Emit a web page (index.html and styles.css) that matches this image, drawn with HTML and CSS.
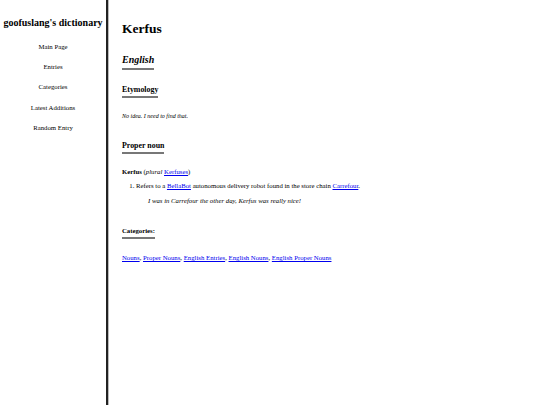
FILE: index.html
```html
<!DOCTYPE html>
<html lang="en">
<head>
  <meta charset="UTF-8" />
  <meta name="viewport" content="width=device-width, initial-scale=1.0"/>
  <title>Kerfus - goofuslang's dictionary</title>
  <link rel="stylesheet" href="styles.css">
</head>
<body>
  <aside class="sidebar">
    <h1 class="site-title">goofuslang's dictionary</h1>
    <nav>
      <a href="#" class="nav-link">Main Page</a>
      <a href="#" class="nav-link">Entries</a>
      <a href="#" class="nav-link">Categories</a>
      <a href="#" class="nav-link">Latest Additions</a>
      <a href="#" class="nav-link">Random Entry</a>
    </nav>
  </aside>

  <main class="entry">
    <h1 class="entry-title">Kerfus</h1>

    <h2 class="lang"><span class="bar">English</span></h2>

    <h3 class="section"><span class="bar">Etymology</span></h3>
    <p class="etym">No idea. I need to find that.</p>

    <h3 class="section pos"><span class="bar">Proper noun</span></h3>
    <p class="headword"><b>Kerfus</b> (<i>plural</i> <a href="#">Kerfuses</a>)</p>
    <ol class="senses">
      <li>
        Refers to a <a href="#">BellaBot</a> autonomous delivery robot found in the store chain <a href="#">Carrefour</a>.
        <p class="example">I was in Carrefour the other day, Kerfus was really nice!</p>
      </li>
    </ol>

    <h4 class="cats-title"><span class="bar">Categories:</span></h4>
    <p class="cats">
      <a href="#">Nouns</a>, <a href="#">Proper Nouns</a>, <a href="#">English Entries</a>, <a href="#">English Nouns</a>, <a href="#">English Proper Nouns</a>
    </p>
  </main>
</body>
</html>
```

FILE: styles.css
```css
* {
  box-sizing: border-box;
}

body {
  margin: 0;
  display: flex;
  min-height: 100vh;
  font-family: 'Liberation Serif', 'Times New Roman', serif;
  font-size: 6.75px;
  color: #000;
  background: #fff;
}

a {
  color: #0000ee;
}

/* sidebar */
.sidebar {
  width: 108px;
  flex-shrink: 0;
  border-right: 2px solid #222;
  box-shadow: 1px 0 0 #bbb;
  text-align: center;
}

.site-title {
  font-size: 10px;
  margin: 17px 0 14px;
  line-height: 12px;
  white-space: nowrap;
}

.nav-link {
  display: block;
  color: #000;
  text-decoration: none;
  line-height: 8px;
  margin-bottom: 12.2px;
}

/* entry */
.entry {
  flex: 1;
  padding-left: 14px;
}

.bar {
  display: inline-block;
  padding-bottom: 2px;
  border-bottom: 2px solid #777;
}

.entry-title {
  font-size: 13.5px;
  line-height: 16px;
  margin: 21px 0 0;
}

.lang {
  font-size: 10px;
  font-style: italic;
  line-height: 12px;
  margin: 17px 0 0;
}

.section {
  font-size: 7.9px;
  line-height: 9px;
  margin: 15px 0 0;
}

.etym {
  font-size: 6px;
  font-style: italic;
  line-height: 7px;
  margin: 15px 0 0;
}

.section.pos {
  margin-top: 21px;
}

.headword {
  line-height: 8px;
  margin: 14px 0 0;
}

.senses {
  margin: 6px 0 0;
  padding-left: 14px;
  line-height: 8px;
}

.example {
  font-style: italic;
  margin: 7px 0 0 12px;
}

.cats-title {
  font-size: 6.75px;
  line-height: 8px;
  margin: 22px 0 0;
}

.cats {
  line-height: 8px;
  margin: 15px 0 0;
}
```
